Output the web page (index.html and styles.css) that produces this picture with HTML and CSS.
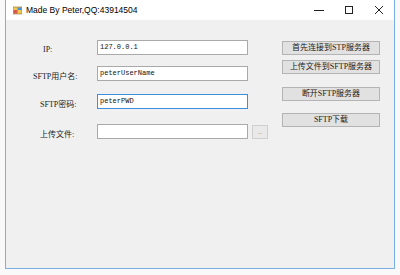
FILE: index.html
```html
<!DOCTYPE html>
<html lang="zh-CN">
<head>
  <meta charset="UTF-8" />
  <title>Made By Peter,QQ:43914504</title>
  <link rel="stylesheet" href="styles.css">
</head>
<body>

  <div class="window">
    <!-- Title bar -->
    <div class="titlebar">
      <svg class="app-icon" width="9" height="9" viewBox="0 0 9 9">
        <rect x="0" y="1" width="9" height="7" fill="#f2c94c" />
        <rect x="0.5" y="4" width="4" height="3.5" fill="#d9534f" />
        <rect x="4.5" y="1.5" width="4" height="2.5" fill="#4a90d9" />
        <rect x="0" y="1" width="9" height="7" fill="none" stroke="#8a6d3b" stroke-width="0.6" />
      </svg>
      <span class="title">Made By Peter,QQ:43914504</span>
      <div class="controls">
        <span class="ctl">
          <svg width="10" height="10" viewBox="0 0 10 10"><path d="M0 5.5h10" stroke="#222" stroke-width="1" /></svg>
        </span>
        <span class="ctl">
          <svg width="10" height="10" viewBox="0 0 10 10"><rect x="1.5" y="1.5" width="7" height="7" fill="none" stroke="#222" stroke-width="1" /></svg>
        </span>
        <span class="ctl">
          <svg width="10" height="10" viewBox="0 0 10 10"><path d="M1 1l8 8M9 1l-8 8" stroke="#222" stroke-width="1" /></svg>
        </span>
      </div>
    </div>

    <!-- Client area -->
    <div class="client">
      <div class="form">
        <div class="row row-ip">
          <label class="lbl">IP:</label>
          <div class="box">127.0.0.1</div>
        </div>
        <div class="row row-user">
          <label class="lbl">SFTP用户名:</label>
          <div class="box">peterUserName</div>
        </div>
        <div class="row row-pwd">
          <label class="lbl">SFTP密码:</label>
          <div class="box focused">peterPWD</div>
        </div>
        <div class="row row-file">
          <label class="lbl">上传文件:</label>
          <div class="box"></div>
          <button class="browse">..</button>
        </div>
      </div>

      <div class="actions">
        <button class="btn">首先连接到STP服务器</button>
        <button class="btn">上传文件到SFTP服务器</button>
        <button class="btn gap">断开SFTP服务器</button>
        <button class="btn gap-sm">SFTP下载</button>
      </div>
    </div>
  </div>

</body>
</html>
```

FILE: styles.css
```css
* {
  box-sizing: border-box;
  margin: 0;
  padding: 0;
}

body {
  background: #f9f9f9;
  padding-left: 5px;
  width: 400px;
  height: 275px;
  overflow: hidden;
}

.window {
  width: 390px;
  height: 269px;
  border: 1px solid #79afe3;
  border-top: none;
  background: #f0f0f0;
  display: flex;
  flex-direction: column;
}

/* Title bar */
.titlebar {
  height: 20px;
  background: #fff;
  display: flex;
  align-items: center;
  padding-left: 7px;
}

.app-icon {
  margin-right: 4px;
}

.title {
  font-family: "Liberation Sans", sans-serif;
  font-size: 8.5px;
  color: #000;
}

.controls {
  margin-left: auto;
  display: flex;
  height: 100%;
}

.ctl {
  width: 30px;
  display: flex;
  align-items: center;
  justify-content: center;
}

/* Client area */
.client {
  flex: 1;
  display: flex;
}

.form {
  width: 276px;
  padding-top: 20px;
}

.row {
  display: flex;
  align-items: center;
  height: 15px;
}

.row-user { margin-top: 11px; }
.row-pwd  { margin-top: 13px; }
.row-file { margin-top: 15px; }

.lbl {
  width: 91px;
  padding-top: 3px;
  font-family: "Liberation Serif", "Noto Sans CJK SC", serif;
  font-size: 8px;
  color: #222;
  white-space: nowrap;
}

.row-ip .lbl   { padding-left: 37px; }
.row-user .lbl { padding-left: 27px; }
.row-pwd .lbl  { padding-left: 34px; }
.row-file .lbl { padding-left: 34px; }

.box {
  width: 151px;
  height: 15px;
  background: #fff;
  border: 1px solid #a9a9a9;
  padding-left: 2px;
  font-family: "Liberation Mono", monospace;
  font-size: 7px;
  line-height: 13px;
  color: #111;
}

.box.focused {
  border-color: #3c8fdc;
}

.browse {
  width: 16px;
  height: 14px;
  margin-left: 4px;
  background: #e9e9e9;
  border: 1px solid #cfcfcf;
  color: #888;
  font-size: 7px;
  font-family: "Liberation Sans", sans-serif;
}

.actions {
  width: 98px;
  padding-top: 21px;
  display: flex;
  flex-direction: column;
  gap: 5px;
}

.btn {
  height: 14px;
  background: #e1e1e1;
  border: 1px solid #b4b4b4;
  font-family: "Liberation Serif", "Noto Sans CJK SC", serif;
  font-size: 8px;
  color: #222;
  line-height: 12px;
}

.btn.gap    { margin-top: 8px; }
.btn.gap-sm { margin-top: 7px; }
```
